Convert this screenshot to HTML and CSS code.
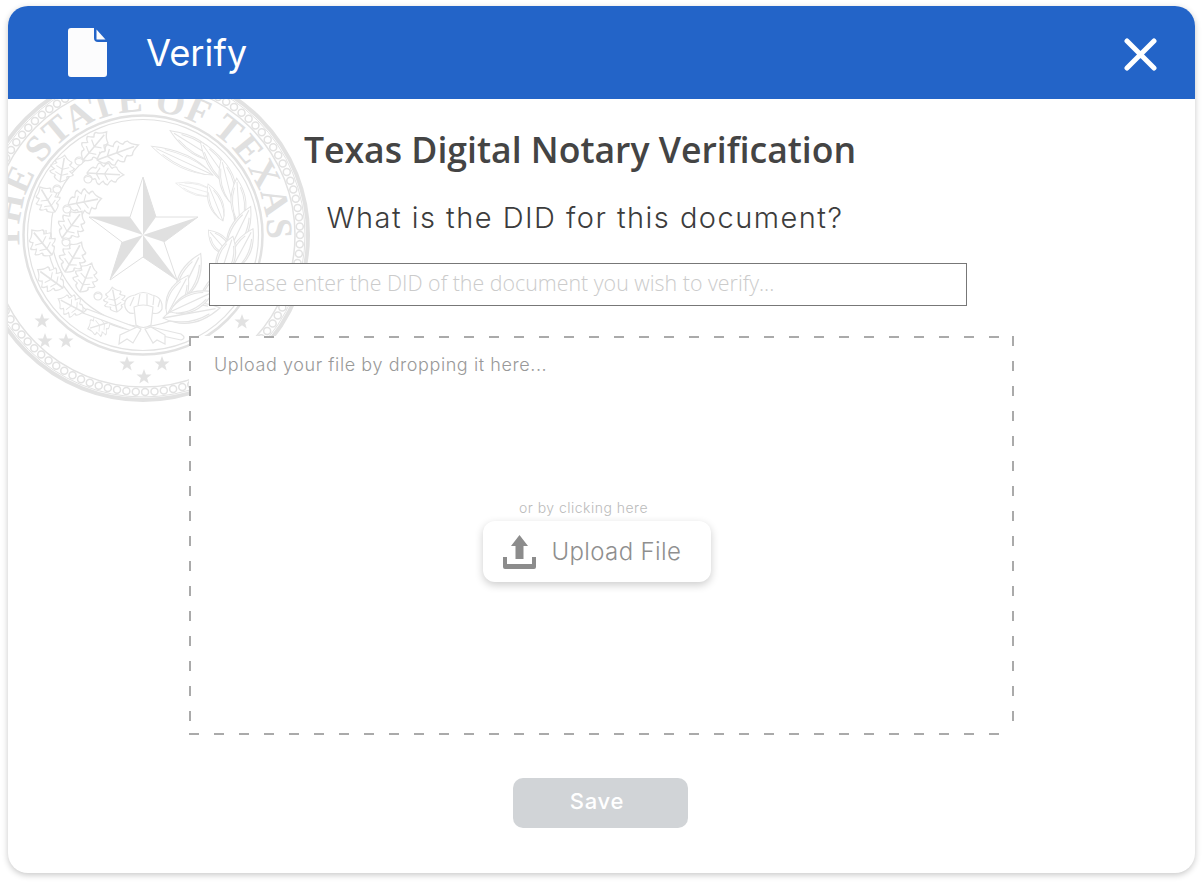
FILE: index.html
```html
<!DOCTYPE html>
<html lang="en">
  <head>
    <meta charset="UTF-8" />
    <title>Verify</title>
    <link rel="stylesheet" href="styles.css">
  </head>
  <body>
    <div class="card">
      <svg class="seal" viewBox="-170 -170 340 340" width="340" height="340">
        <defs>
          <g id="oak">
            <path d="M0 0 Q4 -5 7 -5 Q9 -4 10 -5 Q11 -9 14 -9 Q16 -7 18 -6 Q20 -9 23 -9 Q25 -6 27 -5 Q30 -7 32 -6 Q33 -3 40 0 Q33 3 32 6 Q30 7 27 5 Q25 6 23 9 Q20 9 18 6 Q16 7 14 9 Q11 9 10 5 Q9 4 7 5 Q4 5 0 0 Z" />
            <path d="M0 0 H36 M10 0 L14 -5 M10 0 L14 5 M19 0 L23 -5 M19 0 L23 5" />
          </g>
          <g id="olive">
            <path d="M0 0 Q45 -15 100 0 Q45 15 0 0 Z" />
            <path d="M0 0 H92 M10 -3 Q45 -9 80 -3 M10 3 Q45 9 80 3" />
          </g>
          <g id="acorn">
            <circle r="4" />
            <path d="M-4 -1 Q0 -4 4 -1" />
          </g>
          <polygon id="tiny" points="0,-8 2,-2.600 7.600,-2.500 3.100,1 4.700,6.500 0,3.200 -4.700,6.500 -3.100,1 -7.600,-2.500 -2,-2.600" />
          <path id="arc" d="M-123 15 A124 124 0 1 1 123 17" />
        </defs>

        <g class="seal-rings">
          <circle r="165" stroke-width="4" />
          <circle r="162" stroke-width="1" />
          <circle r="152" stroke-width="1.500" />
          <circle r="119.500" stroke-width="2.500" />
          <circle r="115.500" stroke-width="1.200" />
          <circle class="beads" r="157" stroke-width="8.500" stroke-dasharray="0 9.400" />
          <circle class="beads-in" r="157" stroke-width="5.500" stroke-dasharray="0 9.400" />
        </g>

        <text class="seal-text"><textPath href="#arc" textLength="408" lengthAdjust="spacing">THE STATE OF TEXAS</textPath></text>

        <polygon class="star-line" points="0,-58 13,-18 55,-18 21,7 34,45 0,22 -33,45 -21,7 -54,-18 -13,-18" />
        <g class="star-cut">
          <polygon points="0,0 0,-58 13,-18" />
          <polygon points="0,0 55,-18 21,7" />
          <polygon points="0,0 34,45 0,22" />
          <polygon points="0,0 -33,45 -21,7" />
          <polygon points="0,0 -54,-18 -13,-18" />
        </g>

        <path class="stem" d="M0 92 C-50 88 -92 45 -92 -5 C-92 -40 -72 -68 -44 -84" />
        <path class="stem" d="M-2 96 C-50 94 -97 50 -97 -5" />
        <path class="stem" d="M0 92 C50 88 92 45 92 -5 C92 -30 85 -48 72 -62" />

        <g class="leaf">
          <use href="#oak" transform="translate(-60 -75) rotate(-50) scale(.92 1.3)" />
          <use href="#oak" transform="translate(-46 -75) rotate(-20) scale(1.100 1.200)" />
          <use href="#oak" transform="translate(-56 -62) rotate(3) scale(.92 1.200)" />
          <use href="#oak" transform="translate(-75 -30) rotate(-11) scale(.85 1.400)" />
          <use href="#oak" transform="translate(-81 3) rotate(-53) scale(.83 1.400)" />
          <use href="#oak" transform="translate(-88 -23) rotate(-121) scale(.73 1.300)" />
          <use href="#oak" transform="translate(-83 -53) rotate(-80) scale(.68 1.300)" />
          <use href="#oak" transform="translate(-91 20) rotate(-129) scale(.8 1.400)" />
          <use href="#oak" transform="translate(-78 37) rotate(-61) scale(.85 1.400)" />
          <use href="#oak" transform="translate(-63 57) rotate(-68) scale(.78 1.300)" />
          <use href="#oak" transform="translate(-80 53) rotate(-144) scale(.78 1.300)" />
          <use href="#oak" transform="translate(-60 77) rotate(-152) scale(.7 1.200)" />
          <use href="#oak" transform="translate(-26 77) rotate(-101) scale(.63 1.200)" />
          <use href="#oak" transform="translate(-33 87) rotate(163) scale(.58 1.200)" />
          <use href="#acorn" transform="translate(-64 -74)" />
          <use href="#acorn" transform="translate(-55 -56)" />
          <use href="#acorn" transform="translate(-86 -46)" />
          <use href="#acorn" transform="translate(-76 -26)" />
          <use href="#acorn" transform="translate(-77 7)" />
          <use href="#acorn" transform="translate(-45 61)" />
        </g>
        <g class="leaf thin">
          <use href="#olive" transform="translate(70 -60) rotate(-155) scale(.68 .9)" />
          <use href="#olive" transform="translate(77 -73) rotate(-148) scale(.59 1)" />
          <use href="#olive" transform="translate(74 -40) rotate(-164) scale(.43 .8)" />
          <use href="#olive" transform="translate(90 -47) rotate(-125) scale(.57 1)" />
          <use href="#olive" transform="translate(90 -30) rotate(-104) scale(.48 1)" />
          <use href="#olive" transform="translate(97 -10) rotate(-94) scale(.47 1)" />
          <use href="#olive" transform="translate(80 -14) rotate(-112) scale(.4 .9)" />
          <use href="#olive" transform="translate(84 20) rotate(-64) scale(.54 1.200)" />
          <use href="#olive" transform="translate(87 20) rotate(-131) scale(.33 1)" />
          <use href="#olive" transform="translate(87 37) rotate(-62) scale(.49 1.200)" />
          <use href="#olive" transform="translate(76 44) rotate(-72) scale(.45 1.200)" />
          <use href="#olive" transform="translate(34 67) rotate(-64) scale(.54 1.300)" />
          <use href="#olive" transform="translate(24 80) rotate(-62) scale(.45 1.200)" />
          <use href="#olive" transform="translate(57 73) rotate(-53) scale(.5 1.200)" />
          <use href="#olive" transform="translate(20 83) rotate(-10) scale(.58 1.300)" />
          <use href="#olive" transform="translate(27 77) rotate(-25) scale(.48 1.200)" />
        </g>

        <!-- ribbon and shell at the foot of the wreath -->
        <g class="leaf">
          <path d="M-8 92 L-56 74 L-60 78 L-6 98 Z" />
          <path d="M8 92 L38 99 Q44 103 38 105 L6 98 Z" />
          <path d="M-6 92 L-23 100 L-24 109 L-16 104 L-10 108 L-2 94 Z" />
          <path d="M8 92 L22 100 L22 109 L14 105 L10 108 L2 94 Z" />
          <path d="M-18 72 Q-20 62 -8 60 Q0 55 9 60 Q20 62 19 74 Q16 80 9 78 L-8 78 Q-15 80 -18 72 Z" />
          <path d="M-13 71 L-9 62 M-5 70 L-3 59 M4 70 L4 59 M10 70 L11 61 M15 72 L17 65" />
          <path d="M-9 72 Q0 68 10 72 L8 90 Q0 95 -7 90 Z" />
        </g>

        <g class="tiny-stars">
          <use href="#tiny" x="-101" y="86" />
          <use href="#tiny" x="-98" y="106" />
          <use href="#tiny" x="-77" y="106" />
          <use href="#tiny" x="-16" y="129" />
          <use href="#tiny" x="1" y="142" />
          <use href="#tiny" x="19" y="129" />
          <use href="#tiny" x="99" y="87" />
        </g>
      </svg>

      <div class="topbar">
        <svg class="file-icon" viewBox="0 0 39 49" width="39" height="49">
          <path d="M3 0 H26 V10 Q26 14 30 14 H39 V46 Q39 49 36 49 H3 Q0 49 0 46 V3 Q0 0 3 0 Z" />
          <path d="M28.500 1.500 L37.500 11.500 H28.500 Z" />
        </svg>
        <h1 class="topbar-title">Verify</h1>
        <svg class="close-icon" viewBox="0 0 33 33" width="33" height="33">
          <path d="M3 3 L30 30 M30 3 L3 30" />
        </svg>
      </div>

      <div class="content">
        <h2 class="heading">Texas Digital Notary Verification</h2>
        <p class="question">What is the DID for this document?</p>
        <input class="did-input" type="text" placeholder="Please enter the DID of the document you wish to verify..." />

        <div class="dropzone">
          <p class="dropzone-hint">Upload your file by dropping it here...</p>
          <div class="dropzone-center">
            <span class="dropzone-or">or by clicking here</span>
            <button class="upload-btn">
              <svg viewBox="0 0 33 34" width="33" height="34">
                <path d="M16.500 0 L25 11 H20.500 V24 H12.500 V11 H8 Z" />
                <path d="M0 22 H4 V29 H29 V22 H33 V32 Q33 34 31 34 H2 Q0 34 0 32 Z" />
              </svg>
              Upload File
            </button>
          </div>
        </div>

        <button class="save-btn">Save</button>
      </div>
    </div>
  </body>
</html>
```

FILE: styles.css
```css
* {
  box-sizing: border-box;
}
body {
  margin: 0;
  min-height: 885px;
  background-color: #fff;
  font-family: "Inter", "Liberation Sans", sans-serif;
}
.card {
  position: relative;
  width: 1187px;
  height: 867px;
  margin: 6px 0 0 8px;
  border-radius: 20px;
  background-color: #fff;
  box-shadow: 0 2px 6px rgba(0, 0, 0, 0.22);
  overflow: hidden;
}

/* seal sits behind everything */
.seal {
  position: absolute;
  left: -35px;
  top: 59px;
  fill: none;
  stroke: #e2e2e2;
}
.seal-rings .beads,
.seal-rings .beads-in {
  stroke-linecap: round;
}
.seal-rings .beads-in {
  stroke: #fff;
}
.seal-text {
  fill: #e0e0e0;
  stroke: none;
  font-family: "Liberation Serif", serif;
  font-size: 37px;
  font-weight: 700;
}
.star-line {
  fill: #fff;
  stroke: #e0e0e0;
  stroke-width: 1;
}
.star-cut {
  fill: #e0e0e0;
  stroke: none;
}
.stem {
  stroke-width: 1.2;
}
.leaf {
  fill: #fff;
  stroke: #e4e4e4;
  stroke-width: 1.2;
}
.leaf.thin {
  stroke-width: 1;
}
.tiny-stars {
  fill: #e2e2e2;
  stroke: none;
}

.topbar {
  position: relative;
  height: 93px;
  display: flex;
  align-items: center;
  padding: 0 38px 0 60px;
  background-color: #2364c8;
}
.file-icon {
  fill: #fcfcfd;
}
.topbar-title {
  flex: 1;
  margin: 0 0 0 39px;
  color: #fff;
  font-size: 36.300px;
  font-weight: 400;
}
.close-icon {
  margin-top: 3px;
  fill: none;
  stroke: #fff;
  stroke-width: 5;
  stroke-linecap: round;
}

.content {
  position: relative;
  display: flex;
  flex-direction: column;
  align-items: center;
}
.heading {
  margin: 25px 43px 0 0;
  color: #444;
  font-family: "Open Sans", sans-serif;
  font-size: 35.600px;
  font-weight: 600;
  line-height: 50px;
}
.question {
  margin: 26px 33px 0 0;
  color: #3c3c3c;
  font-size: 29px;
  font-weight: 300;
  letter-spacing: 1.470px;
  line-height: 36px;
}
.did-input {
  width: 758px;
  height: 43px;
  margin: 27px 27px 0 0;
  padding: 0 15px 5px;
  border: 1px solid #777;
  background-color: #fff;
  font-family: "Open Sans", sans-serif;
  font-size: 21.400px;
  font-weight: 300;
}
.did-input::placeholder {
  color: #cbcbcb;
}
.dropzone {
  width: 825px;
  height: 399px;
  margin-top: 30px;
  padding: 18px 25px;
  display: flex;
  flex-direction: column;
  background-color: #fff;
  background-image:
    repeating-linear-gradient(90deg, #aaa 0 10px, transparent 10px 25px),
    repeating-linear-gradient(90deg, #aaa 0 10px, transparent 10px 25px),
    repeating-linear-gradient(180deg, #aaa 0 10px, transparent 10px 25px),
    repeating-linear-gradient(180deg, #aaa 0 10px, transparent 10px 25px);
  background-size: 100% 2px, 100% 2px, 2px 100%, 2px 100%;
  background-position: 0 0, 0 100%, 0 0, 100% 0;
  background-repeat: no-repeat;
}
.dropzone-hint {
  margin: 0;
  color: #999;
  font-size: 18px;
  font-weight: 300;
  letter-spacing: 0.580px;
  line-height: 22px;
}
.dropzone-center {
  display: flex;
  flex-direction: column;
  align-items: center;
  margin: 123px 10px 0 0;
}
.dropzone-or {
  margin-right: 26px;
  color: #bbb;
  font-size: 14px;
  font-weight: 300;
  letter-spacing: 0.480px;
  line-height: 18px;
}
.upload-btn {
  width: 228px;
  height: 61px;
  margin-top: 4px;
  display: flex;
  align-items: center;
  gap: 16px;
  padding: 0 20px;
  border: none;
  border-radius: 12px;
  background-color: #fff;
  box-shadow: 0 3px 8px rgba(0, 0, 0, 0.2);
  color: #8f8f8f;
  font-family: inherit;
  font-size: 24px;
  font-weight: 300;
  letter-spacing: 0.360px;
}
.upload-btn svg {
  fill: #8c8c8c;
}
.save-btn {
  width: 175px;
  height: 50px;
  margin: 43px 2px 0 0;
  padding: 0 7px 4px 0;
  border: none;
  border-radius: 10px;
  background-color: #d1d4d7;
  color: #fff;
  font-family: inherit;
  font-size: 22px;
  font-weight: 500;
  letter-spacing: 0.700px;
}
```
